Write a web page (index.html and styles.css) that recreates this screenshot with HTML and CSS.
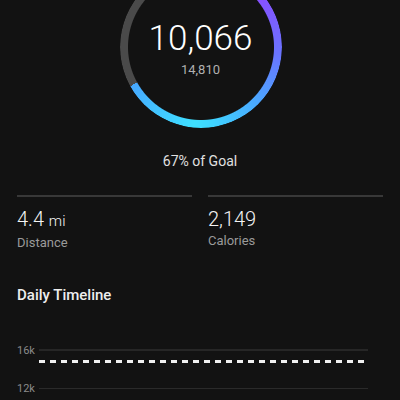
FILE: index.html
```html
<!DOCTYPE html>
<html lang="en">

<head>
    <meta charset="UTF-8">
    <meta name="viewport" content="width=device-width, initial-scale=1.0">
    <title>Steps</title>
    <link rel="stylesheet" href="styles.css">
</head>

<body>

    <div class="screen">
        <!-- steps ring -->
        <section class="summary">
            <div class="ring">
                <div class="ring-track"></div>
                <div class="ring-text">
                    <span class="ring-value">10,066</span>
                    <span class="ring-goal">14,810</span>
                </div>
            </div>
            <p class="goal-pct">67% of Goal</p>
        </section>

        <section class="stats">
            <div class="stat">
                <div class="stat-value">4.4 <span class="stat-unit">mi</span></div>
                <div class="stat-label">Distance</div>
            </div>
            <div class="stat">
                <div class="stat-value">2,149</div>
                <div class="stat-label">Calories</div>
            </div>
        </section>

        <h2 class="section-title">Daily Timeline</h2>

        <div class="chart">
            <div class="chart-row">
                <span class="chart-label">16k</span>
                <span class="chart-grid chart-grid-top"></span>
            </div>
            <div class="chart-row">
                <span class="chart-label">12k</span>
                <span class="chart-grid"></span>
            </div>
            <!-- goal line, 14,810 between 16k and 12k -->
            <div class="goal-line" style="top: 38%"></div>
        </div>
    </div>

</body>

</html>
```

FILE: styles.css
```css
body {
    margin: 0;
    padding: 0;
    font-family: 'Roboto', sans-serif;
    background: #121212;
    color: #f2f2f2;
    overflow: hidden;
}

.screen {
    padding: 0 17px;
}

.summary {
    display: flex;
    flex-direction: column;
    align-items: center;
    margin-top: -34px;
}

.ring {
    display: grid;
    width: 162px;
    height: 162px;
    margin-left: 1px;
}

.ring-track,
.ring-text {
    grid-area: 1 / 1;
}

.ring-track {
    border-radius: 50%;
    background: conic-gradient(from 0deg,
            #9a40ff 0deg,
            #8a4cff 45deg,
            #6a74ff 95deg,
            #4aa8ff 135deg,
            #3ed8ff 175deg,
            #3ee0ff 185deg,
            #42c4ff 215deg,
            #47a8ff 241deg,
            #4a4a4a 241deg 360deg);
    -webkit-mask: radial-gradient(circle closest-side, transparent 72.5px, #000 73.5px);
    mask: radial-gradient(circle closest-side, transparent 72.5px, #000 73.5px);
}

.ring-text {
    display: flex;
    flex-direction: column;
    align-items: center;
    justify-content: center;
    padding-top: 2px;
}

.ring-value {
    font-size: 35px;
    font-weight: 300;
    line-height: 40px;
    color: #ffffff;
}

.ring-goal {
    font-size: 13px;
    line-height: 16px;
    margin-top: 3px;
    color: #b0b0b0;
}

.goal-pct {
    margin: 23px 0 0 0;
    font-size: 14px;
    line-height: 20px;
    color: #e0e0e0;
}

.stats {
    display: grid;
    grid-template-columns: 1fr 1fr;
    gap: 16px;
    margin-top: 24px;
}

.stat {
    border-top: 2px solid #383838;
    padding-top: 10px;
}

.stat-value {
    font-size: 20px;
    font-weight: 300;
    line-height: 24px;
    color: #f4f4f4;
}

.stat-unit {
    font-size: 15px;
}

.stat-label {
    margin-top: 2px;
    font-size: 13px;
    line-height: 16px;
    color: #9a9a9a;
}

.section-title {
    margin: 34px 0 0 0;
    font-size: 15px;
    font-weight: 500;
    line-height: 20px;
    color: #eeeeee;
}

.chart {
    position: relative;
    margin-top: 26px;
    padding-right: 15px;
}

.chart-row {
    display: flex;
    align-items: center;
    height: 38px;
}

.chart-label {
    width: 22px;
    font-size: 11px;
    color: #8a8a8a;
}

.chart-grid {
    flex: 1;
    height: 1px;
    background: #2a2a2a;
}

.chart-grid-top {
    height: 2px;
    background: #262626;
}

.goal-line {
    position: absolute;
    left: 22px;
    right: 15px;
    height: 3px;
    background: repeating-linear-gradient(to right, #f0f0f0 0 6px, transparent 6px 11px);
}
```
